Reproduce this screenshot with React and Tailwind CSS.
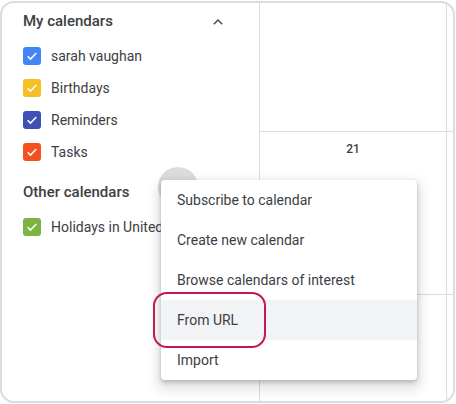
import React from "react";

const font = { fontFamily: "Roboto, 'Liberation Sans', sans-serif" };

const Check = ({ color }) => (
  <span className={`flex h-[18px] w-[18px] items-center justify-center rounded-[3px] ${color}`}>
    <svg width="14" height="14" viewBox="0 0 24 24">
      <path d="M4.5 12.5l4.8 4.8L19.5 7" fill="none" stroke="#fff" strokeWidth="2.6" />
    </svg>
  </span>
);

const CalendarRow = ({ color, label }) => (
  <div className="flex h-[32px] items-center gap-[10px] whitespace-nowrap">
    <Check color={color} />
    <span className="text-[14px] text-[#3c4043]">{label}</span>
  </div>
);

const menuItems = [
  "Subscribe to calendar",
  "Create new calendar",
  "Browse calendars of interest",
  "From URL",
  "Import",
];

export default function App() {
  return (
    <div className="relative h-[404px] w-[456px] overflow-hidden bg-white" style={font}>
      <div className="mt-[1px] flex h-[402px] w-[455px] overflow-hidden rounded-[14px] border-2 border-[#dadce0]">
        {/* Sidebar */}
        <div className="w-[258px] shrink-0 border-r border-[#dadce0] pl-[21px] pr-[30px]">
          <div className="flex h-[37px] items-center justify-between">
            <span className="text-[15px] font-medium text-[#3c4043]">My calendars</span>
            <svg width="20" height="20" viewBox="0 0 24 24" className="mr-[1px]">
              <path d="M12 8.5l-5.6 5.6 1.1 1.1 4.5-4.5 4.5 4.5 1.1-1.1z" fill="#3c4043" />
            </svg>
          </div>
          <CalendarRow color="bg-[#4285f4]" label="sarah vaughan" />
          <CalendarRow color="bg-[#f6bf26]" label="Birthdays" />
          <CalendarRow color="bg-[#3f51b5]" label="Reminders" />
          <CalendarRow color="bg-[#f4511e]" label="Tasks" />
          <div className="flex h-[43px] items-center pt-[5px]">
            <span className="text-[15px] font-medium text-[#3c4043]">Other calendars</span>
          </div>
          <CalendarRow color="bg-[#7cb342]" label="Holidays in United States" />
        </div>

        {/* Calendar grid */}
        <div className="flex flex-1">
          <div className="flex w-[187px] flex-col border-r border-[#dadce0]">
            <div className="h-[129px] border-b border-[#dadce0]" />
            <div className="flex h-[163px] justify-center border-b border-[#dadce0] pt-[9px]">
              <span className="text-[12px] font-medium leading-[16px] text-[#3c4043]">21</span>
            </div>
            <div className="flex-1" />
          </div>
          <div className="flex flex-1 flex-col">
            <div className="h-[129px] border-b border-[#dadce0]" />
            <div className="h-[163px] border-b border-[#dadce0]" />
          </div>
        </div>
      </div>

      {/* Hovered add button */}
      <div className="absolute left-[158px] top-[167px] h-[40px] w-[40px] rounded-full bg-[#dcdcdc]" />

      {/* Menu */}
      <div className="absolute left-[161px] top-[180px] w-[256px] rounded-[4px] bg-white shadow-[0_2px_4px_rgba(60,64,67,0.3),0_6px_12px_4px_rgba(60,64,67,0.15)]">
        {menuItems.map((item) => (
          <div
            key={item}
            className={`flex h-[40px] items-center px-[16px] text-[14px] text-[#3c4043] ${
              item === "From URL" ? "bg-[#f1f3f4]" : ""
            }`}
          >
            {item}
          </div>
        ))}
      </div>

      {/* Highlight ring */}
      <div className="absolute left-[153px] top-[292px] h-[56px] w-[113px] rounded-[14px] border-2 border-[#c2185b]" />
    </div>
  );
}
